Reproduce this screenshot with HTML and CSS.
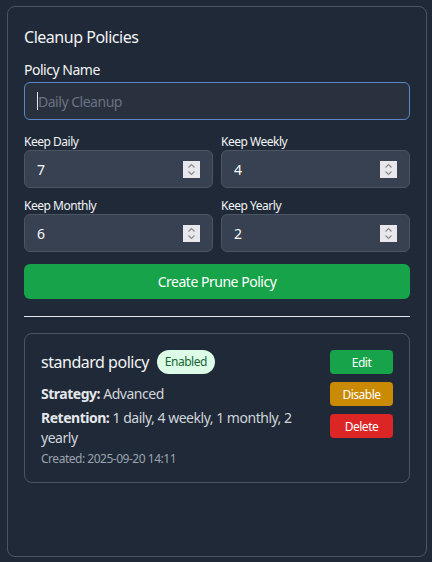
FILE: index.html
```html
<!DOCTYPE html>
<html lang="en">
<head>
<meta charset="utf-8">
<title>Cleanup Policies</title>
<link rel="stylesheet" href="styles.css">
</head>
<body>
<section class="panel">
  <h2 class="title">Cleanup Policies</h2>
  <label class="label-lg" for="pname">Policy Name</label>
  <div class="text-field">
    <span class="caret"></span><span class="placeholder">Daily Cleanup</span>
  </div>
  <div class="grid">
    <div class="field">
      <label class="label-sm">Keep Daily</label>
      <div class="num"><span class="num-val">7</span><span class="spin"><svg viewBox="0 0 17 17" width="17" height="17"><path d="M5.5 6.5 L8.5 3.5 L11.5 6.5" /><path d="M5.5 10.5 L8.5 13.5 L11.5 10.5" /></svg></span></div>
    </div>
    <div class="field">
      <label class="label-sm">Keep Weekly</label>
      <div class="num"><span class="num-val">4</span><span class="spin"><svg viewBox="0 0 17 17" width="17" height="17"><path d="M5.5 6.5 L8.5 3.5 L11.5 6.5" /><path d="M5.5 10.5 L8.5 13.5 L11.5 10.5" /></svg></span></div>
    </div>
    <div class="field">
      <label class="label-sm">Keep Monthly</label>
      <div class="num"><span class="num-val">6</span><span class="spin"><svg viewBox="0 0 17 17" width="17" height="17"><path d="M5.5 6.5 L8.5 3.5 L11.5 6.5" /><path d="M5.5 10.5 L8.5 13.5 L11.5 10.5" /></svg></span></div>
    </div>
    <div class="field">
      <label class="label-sm">Keep Yearly</label>
      <div class="num"><span class="num-val">2</span><span class="spin"><svg viewBox="0 0 17 17" width="17" height="17"><path d="M5.5 6.5 L8.5 3.5 L11.5 6.5" /><path d="M5.5 10.5 L8.5 13.5 L11.5 10.5" /></svg></span></div>
    </div>
  </div>
  <button class="create">Create Prune Policy</button>
  <hr class="divider">
  <div class="card">
    <div class="card-info">
      <div class="card-head">
        <span class="card-title">standard policy</span>
        <span class="badge">Enabled</span>
      </div>
      <p class="line strategy"><b>Strategy:</b> Advanced</p>
      <p class="line retention"><b>Retention:</b> 1 daily, 4 weekly, 1 monthly, 2 yearly</p>
      <p class="created">Created: 2025-09-20 14:11</p>
    </div>
    <div class="actions">
      <button class="btn btn-edit">Edit</button>
      <button class="btn btn-disable">Disable</button>
      <button class="btn btn-delete">Delete</button>
    </div>
  </div>
</section>
</body>
</html>
```
FILE: styles.css
```css
* { box-sizing: border-box; }
html, body { margin: 0; padding: 0; }
body {
  background: #1f2937;
  font-family: "Noto Sans", "Open Sans", sans-serif;
  letter-spacing: -0.03em;
  color: #e5e7eb;
  padding: 6px 5px 5px 7px;
}
.panel {
  border: 1px solid #4b5563;
  border-radius: 8px;
  height: 551px;
  padding: 18px 16px 16px;
}
.title {
  margin: 0 0 11px;
  font-size: 16px;
  line-height: 24px;
  font-weight: 400;
  color: #f3f4f6;
}
.label-lg {
  display: block;
  font-size: 14px;
  line-height: 20px;
  margin-bottom: 2px;
  color: #f3f4f6;
}
.text-field {
  height: 38px;
  border: 1px solid #5b87c7;
  border-radius: 6px;
  background: #29313f;
  display: flex;
  align-items: center;
  padding: 0 12px;
  font-size: 14px;
}
.caret {
  width: 1px;
  height: 18px;
  background: #e5e7eb;
}
.placeholder { color: #6b7280; }
.grid {
  display: grid;
  grid-template-columns: 1fr 1fr;
  column-gap: 8px;
  row-gap: 9px;
  margin-top: 13px;
}
.label-sm {
  display: block;
  font-size: 12px;
  line-height: 16px;
  padding-top: 1px;
  color: #f3f4f6;
}
.num {
  height: 38px;
  border: 1px solid #4b5563;
  border-radius: 6px;
  background: #374151;
  display: flex;
  align-items: center;
  justify-content: space-between;
  padding: 0 12px;
  font-size: 14px;
  color: #f9fafb;
}
.spin {
  width: 17px;
  height: 17px;
  background: #e8e8ec;
  display: flex;
}
.spin svg path {
  fill: none;
  stroke: #8a8a90;
  stroke-width: 1.2;
}
.create {
  display: block;
  width: 100%;
  height: 35px;
  margin-top: 12px;
  border: 0;
  border-radius: 6px;
  background: #16a34a;
  color: #fff;
  font-family: inherit;
  letter-spacing: inherit;
  font-size: 14px;
}
.divider {
  margin: 17px 0 16px;
  border: 0;
  border-top: 1px solid #e5e7eb;
}
.card {
  border: 1px solid #4b5563;
  border-radius: 8px;
  padding: 16px 16px 15px;
  display: flex;
  justify-content: space-between;
  gap: 16px;
}
.card-info { flex: 1; }
.card-head {
  display: flex;
  align-items: center;
  gap: 8px;
  height: 24px;
}
.card-title {
  font-size: 16px;
  color: #f3f4f6;
}
.badge {
  background: #dcfce7;
  color: #166534;
  font-size: 12px;
  line-height: 24px;
  padding: 0 8px;
  border-radius: 12px;
}
.line {
  margin: 0;
  font-size: 14px;
  line-height: 20px;
  color: #d1d5db;
}
.line b { color: #e5e7eb; }
.strategy { margin-top: 10px; }
.retention { margin-top: 4px; }
.created {
  margin: 3px 0 0;
  font-size: 12px;
  line-height: 16px;
  color: #9ca3af;
}
.actions {
  display: flex;
  flex-direction: column;
  gap: 8px;
}
.btn {
  width: 63px;
  height: 24px;
  border: 0;
  border-radius: 4px;
  color: #fff;
  font-family: inherit;
  letter-spacing: inherit;
  font-size: 12px;
  padding: 0;
}
.btn-edit { background: #16a34a; }
.btn-disable { background: #ca8a04; }
.btn-delete { background: #dc2626; }
```
